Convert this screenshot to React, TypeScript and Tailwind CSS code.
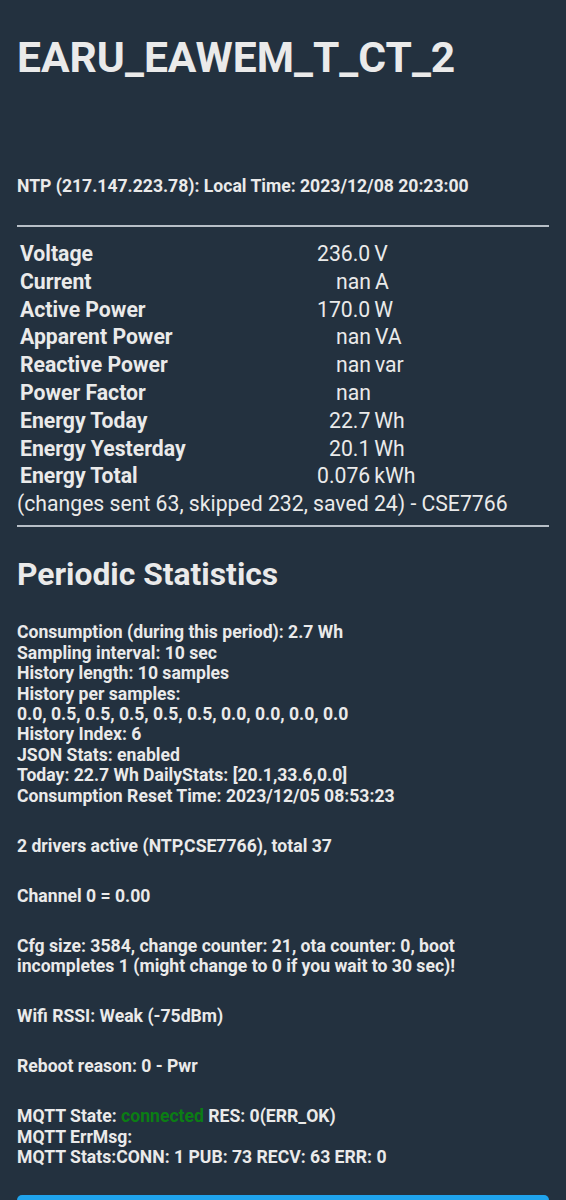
import React from 'react';

type Reading = {
  label: string;
  value: string;
  unit: string;
  indent: number; // where the number starts, px from the row's left edge
};

const readings: Reading[] = [
  { label: 'Voltage', value: '236.0', unit: 'V', indent: 300 },
  { label: 'Current', value: 'nan', unit: 'A', indent: 319 },
  { label: 'Active Power', value: '170.0', unit: 'W', indent: 300 },
  { label: 'Apparent Power', value: 'nan', unit: 'VA', indent: 319 },
  { label: 'Reactive Power', value: 'nan', unit: 'var', indent: 319 },
  { label: 'Power Factor', value: 'nan', unit: '', indent: 319 },
  { label: 'Energy Today', value: '22.7', unit: 'Wh', indent: 312 },
  { label: 'Energy Yesterday', value: '20.1', unit: 'Wh', indent: 312 },
  { label: 'Energy Total', value: '0.076', unit: 'kWh', indent: 300 },
];

const stats = [
  'Consumption (during this period): 2.7 Wh',
  'Sampling interval: 10 sec',
  'History length: 10 samples',
  'History per samples:',
  '0.0, 0.5, 0.5, 0.5, 0.5, 0.5, 0.0, 0.0, 0.0, 0.0',
  'History Index: 6',
  'JSON Stats: enabled',
  'Today: 22.7 Wh DailyStats: [20.1,33.6,0.0]',
  'Consumption Reset Time: 2023/12/05 08:53:23',
];

function ReadingRow({ r }: { r: Reading }) {
  return (
    <div className="relative h-[27.8px] leading-[27.8px]">
      <span className="absolute left-[3px] font-bold">{r.label}</span>
      <span className="absolute whitespace-nowrap" style={{ left: r.indent }}>
        {r.value}
        {r.unit && <span className="ml-[4px]">{r.unit}</span>}
      </span>
    </div>
  );
}

export default function App() {
  return (
    <div className="min-h-[1200px] bg-[#23313f] text-[#eaeaea] px-[17px] font-['Roboto','Liberation_Sans',sans-serif]">
      <h1 className="pt-[31px] text-[42.6px] leading-[52px] font-bold">
        EARU_EAWEM_T_CT_2
      </h1>

      <p className="mt-[92.5px] text-[17.6px] leading-[20px] font-bold">
        NTP (217.147.223.78): Local Time: 2023/12/08 20:23:00
      </p>

      <hr className="mt-[29.5px] border-0 border-t-2 border-[#b7bfc7]" />

      {/* power readings */}
      <div className="mt-[13px] text-[21.2px]">
        {readings.map((r) => (
          <ReadingRow key={r.label} r={r} />
        ))}
        <div className="h-[27.8px] leading-[27.8px] whitespace-nowrap">
          (changes sent 63, skipped 232, saved 24) - CSE7766
        </div>
      </div>

      <hr className="mt-[7.2px] border-0 border-t-2 border-[#b7bfc7]" />

      <h2 className="mt-[28.5px] text-[31.8px] leading-[36px] font-bold">Periodic Statistics</h2>

      <div className="mt-[30.8px] flex flex-col gap-[29.6px] text-[17.6px] leading-[20.4px] font-bold">
        <div>
          {stats.map((s) => (
            <div key={s}>{s}</div>
          ))}
        </div>
        <div>2 drivers active (NTP,CSE7766), total 37</div>
        <div>Channel 0 = 0.00</div>
        <div>
          Cfg size: 3584, change counter: 21, ota counter: 0, boot
          <br />
          incompletes 1 (might change to 0 if you wait to 30 sec)!
        </div>
        <div>Wifi RSSI: Weak (-75dBm)</div>
        <div>Reboot reason: 0 - Pwr</div>
        <div>
          <div>
            MQTT State: <span className="text-[#0b7d14]">connected</span> RES: 0(ERR_OK)
          </div>
          <div>MQTT ErrMsg:</div>
          <div>MQTT Stats:CONN: 1 PUB: 73 RECV: 63 ERR: 0</div>
        </div>
      </div>

      <div className="mt-[27.5px] h-[48px] rounded-[5px] bg-[#1fa3ec]" />
    </div>
  );
}
